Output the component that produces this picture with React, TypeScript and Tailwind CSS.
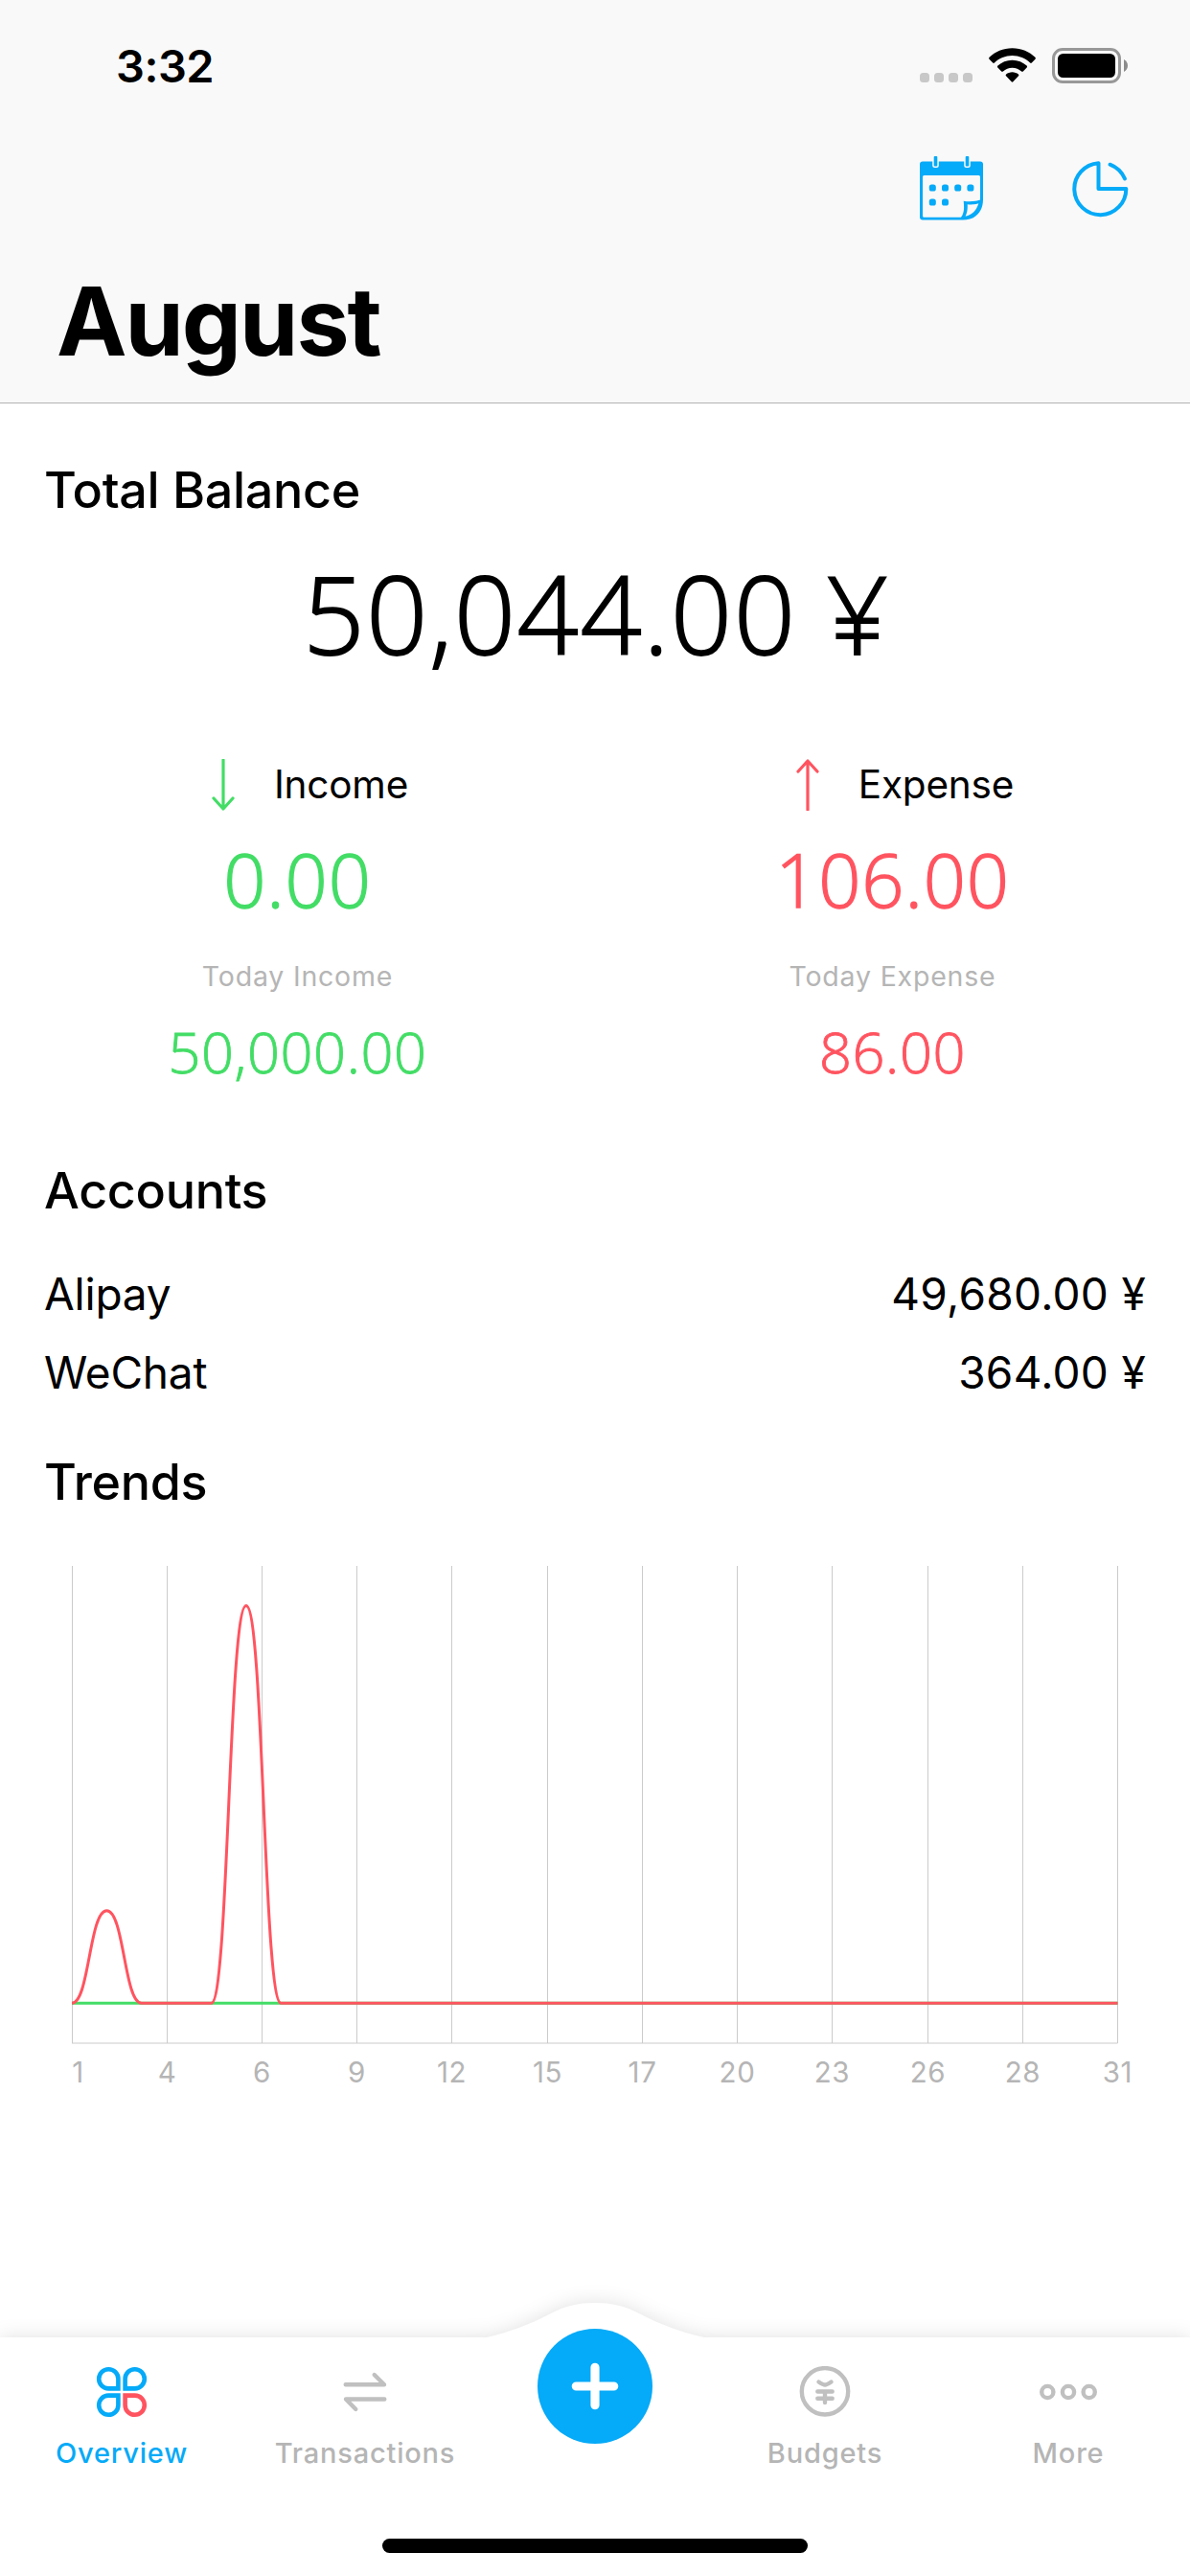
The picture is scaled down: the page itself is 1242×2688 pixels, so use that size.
import React from 'react';

interface FlowCard {
    label: string;
    total: string;
    todayLabel: string;
    today: string;
    color: string;
    up: boolean;
}

const flows: FlowCard[] = [
    { label: 'Income', total: '0.00', todayLabel: 'Today Income', today: '50,000.00', color: 'text-[#43dd66]', up: false },
    { label: 'Expense', total: '106.00', todayLabel: 'Today Expense', today: '86.00', color: 'text-[#ff5460]', up: true },
];

const accounts = [
    { name: 'Alipay', balance: '49,680.00 ¥' },
    { name: 'WeChat', balance: '364.00 ¥' },
];

const axisLabels = [1, 4, 6, 9, 12, 15, 17, 20, 23, 26, 28, 31];

// Daily expense, only the days that are not zero
const expenses: Record<number, number> = { 2: 20, 6: 86 };

const CHART = { left: 75, right: 1166.5, top: 57, base: 513.3, bottom: 555, peak: 98.5 };

function dayX(day: number) {
    return CHART.left + ((day - 1) * (CHART.right - CHART.left)) / 30;
}

function dayY(day: number) {
    return CHART.base - ((expenses[day] ?? 0) / 86) * (CHART.base - CHART.peak);
}

function expensePath() {
    let d = `M${dayX(1)} ${dayY(1)}`;
    for (let day = 2; day <= 31; day++) {
        const mid = (dayX(day - 1) + dayX(day)) / 2;
        d += ` C${mid} ${dayY(day - 1)} ${mid} ${dayY(day)} ${dayX(day)} ${dayY(day)}`;
    }
    return d;
}

function StatusBar() {
    return (
        <div className="flex h-[136px] items-center justify-between pl-[121px] pr-[65px]">
            <span className="text-[47px] font-semibold leading-none tracking-[-0.5px]">3:32</span>
            <div className="flex h-[37px] items-end">
                <div className="mb-px flex gap-[5px]">
                    {[0, 1, 2, 3].map((i) => (
                        <div key={i} className="size-[10px] rounded-[3.5px] bg-[#c8c8c8]" />
                    ))}
                </div>
                <svg className="ml-[17px] h-[37px] w-[49px]" viewBox="0 0 49 37">
                    <path d="M24.5 0.3C34 0.3 42.3 4 48.4 9.8C49 10.4 49 11.1 48.5 11.7L44.8 15.5C44.3 16 43.7 16 43.1 15.5C38.2 10.9 31.7 8.1 24.5 8.1C17.3 8.1 10.8 10.9 5.9 15.5C5.3 16 4.7 16 4.2 15.5L0.5 11.7C0 11.1 0 10.4 0.6 9.8C6.7 4 15 0.3 24.5 0.3Z" />
                    <path d="M24.5 12.8C30.4 12.8 35.6 15 39.6 18.6C40.2 19.2 40.2 19.9 39.7 20.5L35.8 24.4C35.3 24.9 34.7 24.9 34.1 24.4C31.5 22.1 28.2 20.7 24.5 20.7C20.8 20.7 17.5 22.1 14.9 24.4C14.3 24.9 13.7 24.9 13.2 24.4L9.3 20.5C8.8 19.9 8.8 19.2 9.4 18.6C13.4 15 18.6 12.8 24.5 12.8Z" />
                    <path d="M24.5 25.3C27 25.3 29.2 26.2 30.9 27.6C31.5 28.1 31.5 28.8 31 29.3L25.3 35.3C24.8 35.8 24.2 35.8 23.7 35.3L18 29.3C17.5 28.8 17.5 28.1 18.1 27.6C19.8 26.2 22 25.3 24.5 25.3Z" />
                </svg>
                <svg className="ml-[17px] h-[37px] w-[79px]" viewBox="0 0 79 37">
                    <rect x="1.5" y="1.5" width="69" height="34" rx="9.5" fill="none" stroke="#989898" strokeWidth="3" />
                    <rect x="6" y="6" width="60" height="25" rx="5.5" />
                    <path d="M75 12C77.6 13.4 79 15.7 79 18.5C79 21.3 77.6 23.6 75 25Z" fill="#8c8c8c" />
                </svg>
            </div>
        </div>
    );
}

function CalendarIcon() {
    return (
        <svg className="h-[68px] w-[66px]" viewBox="0 0 66 68">
            <path
                fillRule="evenodd"
                fill="#05aaf8"
                d="M3 5.5H63Q66 5.5 66 8.5V45C66 58 58 66.5 45 66.5H3Q0 66.5 0 63.5V8.5Q0 5.5 3 5.5ZM4.5 20Q3 20 3 21.5V62.2Q3 63.7 4.5 63.7H43C46.5 59 46.4 54 45.7 46.8C52 47.8 58 47.3 63 45.5V21.5Q63 20 61.5 20Z"
            />
            <path d="M49.7 50.3C54 50.7 57.5 50.5 61.3 49.3C59.5 56 55 61 47.6 62.8C49.6 58.7 50 54.5 49.7 50.3Z" fill="#f9f9f9" />
            <rect x="13.2" y="-2" width="6.6" height="14" rx="2.5" fill="#f9f9f9" />
            <rect x="46.2" y="-2" width="6.6" height="14" rx="2.5" fill="#f9f9f9" />
            <rect x="14.7" y="0" width="3.6" height="10.5" rx="1" fill="#05aaf8" />
            <rect x="47.7" y="0" width="3.6" height="10.5" rx="1" fill="#05aaf8" />
            <g fill="#05aaf8">
                {[13.3, 26.5, 39.7, 52.9].map((cx) => (
                    <rect key={cx} x={cx - 3.5} y="29.6" width="7" height="7" rx="2.6" />
                ))}
                {[13.3, 26.5].map((cx) => (
                    <rect key={cx} x={cx - 3.5} y="44.6" width="7" height="7" rx="2.6" />
                ))}
            </g>
        </svg>
    );
}

function PieIcon() {
    return (
        <svg className="h-[60px] w-[60px]" viewBox="0 0 60 60" fill="none" stroke="#05aaf8" strokeWidth="4" strokeLinecap="round" strokeLinejoin="round">
            <path d="M27.5 3.2V30H56.3A27 27 0 1 1 27.5 3.2Z" />
            <path d="M39.5 4.7A28 28 0 0 1 55 19.5" />
        </svg>
    );
}

function Header() {
    return (
        <header className="h-[421px] border-b border-[#b2b2b2] bg-[#f9f9f9]">
            <StatusBar />
            <div className="flex h-[122px] items-center justify-end gap-[93px] pr-[63px]">
                <CalendarIcon />
                <PieIcon />
            </div>
            <h1 className="pl-[59px] text-[98.5px] font-bold leading-[156px] tracking-[-2px]">August</h1>
        </header>
    );
}

function FlowArrow({ up }: { up: boolean }) {
    return (
        <svg
            className={`h-[54px] w-[24px] ${up ? '' : 'rotate-180'}`}
            viewBox="0 0 24 54"
            fill="none"
            stroke="currentColor"
            strokeWidth="3.2"
            strokeLinecap="round"
            strokeLinejoin="round"
        >
            <path d="M12 53V2M2 13L12 2L22 13" />
        </svg>
    );
}

function FlowColumn({ flow }: { flow: FlowCard }) {
    return (
        <div className={`flex w-1/2 flex-col items-center ${flow.color}`}>
            <div className="flex h-[60px] items-center gap-[41px] pl-[26px]">
                <FlowArrow up={flow.up} />
                <span className="text-[40.5px] leading-[60px] tracking-[-0.2px] text-black">{flow.label}</span>
            </div>
            <div className="mt-[28px] font-['Open_Sans'] text-[77.5px] font-light leading-[80px] tracking-[0.8px] [-webkit-text-stroke:1.3px_currentColor]">
                {flow.total}
            </div>
            <div className="mt-[42px] text-[28.5px] leading-[40px] tracking-[0.8px] text-[#b5b5b5]">{flow.todayLabel}</div>
            <div className="mt-[28px] font-['Open_Sans'] text-[59.5px] font-light leading-[60px] tracking-[0.6px] [-webkit-text-stroke:0.9px_currentColor]">
                {flow.today}
            </div>
        </div>
    );
}

function TrendsChart() {
    return (
        <svg className="h-[623px] w-[1242px]" viewBox="0 0 1242 623" fill="none">
            {axisLabels.map((label, i) => {
                const x = Math.floor(CHART.left + (i * (CHART.right - CHART.left)) / 11) + 0.5;
                return (
                    <g key={label}>
                        <path d={`M${x} ${CHART.top}V${CHART.bottom}`} stroke="#cbcbcb" strokeWidth="1" />
                        <text x={i === 0 ? 81.5 : x} y="596" textAnchor="middle" fontSize="29.5" letterSpacing="0.6" fill="#b5b5b5">
                            {label}
                        </text>
                    </g>
                );
            })}
            <path d={`M${CHART.left} ${CHART.bottom}H${CHART.right}`} stroke="#cbcbcb" strokeWidth="1" />
            <path d={`M${CHART.left} ${CHART.base}H${CHART.right}`} stroke="#43dd66" strokeWidth="3" />
            <path d={expensePath()} stroke="#ff5460" strokeWidth="3" />
        </svg>
    );
}

function OverviewIcon() {
    return (
        <svg className="h-[54px] w-[54px]" viewBox="0 0 54 54" fill="none" stroke="#05aaf8" strokeWidth="4.6">
            <path d="M23.4 23.4H13.2A10.1 10.1 0 1 1 23.4 13.3Z" />
            <path d="M30.6 23.4H40.8A10.1 10.1 0 1 0 30.6 13.3Z" />
            <path d="M23.4 30.6H13.2A10.1 10.1 0 1 0 23.4 40.7Z" />
            <path d="M30.6 30.6H40.8A10.1 10.1 0 1 1 30.6 40.7Z" stroke="#ff5460" />
        </svg>
    );
}

function TransactionsIcon() {
    return (
        <svg className="h-[54px] w-[54px]" viewBox="0 0 54 54" fill="none" stroke="#c0c0c0" strokeWidth="4.4" strokeLinecap="round" strokeLinejoin="round">
            <path d="M6.7 19.3H47L36.7 9" />
            <path d="M47.3 34.5H7L17.3 45" />
        </svg>
    );
}

function BudgetsIcon() {
    return (
        <svg className="h-[54px] w-[54px]" viewBox="0 0 54 54" fill="none" stroke="#c0c0c0" strokeWidth="4.4" strokeLinecap="round" strokeLinejoin="round">
            <circle cx="27" cy="26.3" r="24.2" />
            <path d="M20.5 16.5Q25 19.5 27 19.5T33.5 16.5M19.3 26.5H34.7M19.3 33.7H34.7M27 26.5V38" />
        </svg>
    );
}

function MoreIcon() {
    return (
        <svg className="h-[54px] w-[62px]" viewBox="0 0 62 54" fill="none" stroke="#c0c0c0" strokeWidth="4.4">
            {[9.3, 31, 52.7].map((cx) => (
                <circle key={cx} cx={cx} cy="27" r="6.1" />
            ))}
        </svg>
    );
}

function Tab({ label, active, children }: { label: string; active?: boolean; children: React.ReactNode }) {
    return (
        <div className="flex w-[254px] flex-col items-center">
            {children}
            <span className={`mt-[17px] text-[29px] font-medium leading-[40px] tracking-[0.8px] ${active ? 'text-[#05aaf8]' : 'text-[#b5b5b5]'}`}>
                {label}
            </span>
        </div>
    );
}

function TabBar() {
    return (
        <nav className="relative mt-auto flex h-[285px] flex-col">
            {/* bar surface with the raised middle */}
            <svg
                className="absolute inset-0 h-[285px] w-[1242px] overflow-visible drop-shadow-[0_0_10px_rgba(0,0,0,0.12)]"
                viewBox="0 0 1242 285"
                fill="#ffffff"
            >
                <path d="M0 36H508C530 31 552 23 573 12C590 3 603 0 621 0C639 0 652 3 669 12C690 23 712 31 735 36H1242V285H0Z" />
            </svg>
            <div className="relative flex justify-between pt-[27px]">
                <div className="flex pt-[39px]">
                    <Tab label="Overview" active>
                        <OverviewIcon />
                    </Tab>
                    <Tab label="Transactions">
                        <TransactionsIcon />
                    </Tab>
                </div>
                <button className="flex size-[120px] items-center justify-center rounded-full bg-[#05aaf8]">
                    <svg className="h-[50px] w-[50px]" viewBox="0 0 50 50" stroke="#ffffff" strokeWidth="9.2" strokeLinecap="round">
                        <path d="M25 5.3V44.7M5.3 25H44.7" />
                    </svg>
                </button>
                <div className="flex pt-[39px]">
                    <Tab label="Budgets">
                        <BudgetsIcon />
                    </Tab>
                    <Tab label="More">
                        <MoreIcon />
                    </Tab>
                </div>
            </div>
            <div className="relative mx-auto mb-[24px] mt-auto h-[15px] w-[444px] rounded-full bg-black" />
        </nav>
    );
}

export default function App() {
    return (
        <div className="flex h-[2688px] w-[1242px] flex-col overflow-hidden bg-white font-[Inter,sans-serif] text-black">
            <Header />
            <main className="flex flex-col pt-[61px]">
                <h2 className="pl-[46px] text-[52px] font-medium leading-[60px] tracking-[-0.3px]">Total Balance</h2>
                <div className="mt-[38px] pl-[3px] text-center font-['Open_Sans'] text-[112px] font-light leading-[120px] tracking-[1.9px] [-webkit-text-stroke:1.9px_currentColor]">
                    50,044.00 ¥
                </div>
                <div className="mt-[89px] flex">
                    {flows.map((flow) => (
                        <FlowColumn key={flow.label} flow={flow} />
                    ))}
                </div>

                <h2 className="mt-[86px] pl-[46px] text-[52px] font-medium leading-[60px] tracking-[-0.3px]">Accounts</h2>
                <div className="mt-[36px] px-[46px]">
                    {accounts.map((account) => (
                        <div key={account.name} className="flex justify-between text-[46px] leading-[82px]">
                            <span className="tracking-[-0.2px]">{account.name}</span>
                            <span className="tracking-[0.3px]">{account.balance}</span>
                        </div>
                    ))}
                </div>

                <h2 className="mt-[44px] pl-[46px] text-[52px] font-medium leading-[60px] tracking-[-0.3px]">Trends</h2>
                <TrendsChart />
            </main>
            <TabBar />
        </div>
    );
}
